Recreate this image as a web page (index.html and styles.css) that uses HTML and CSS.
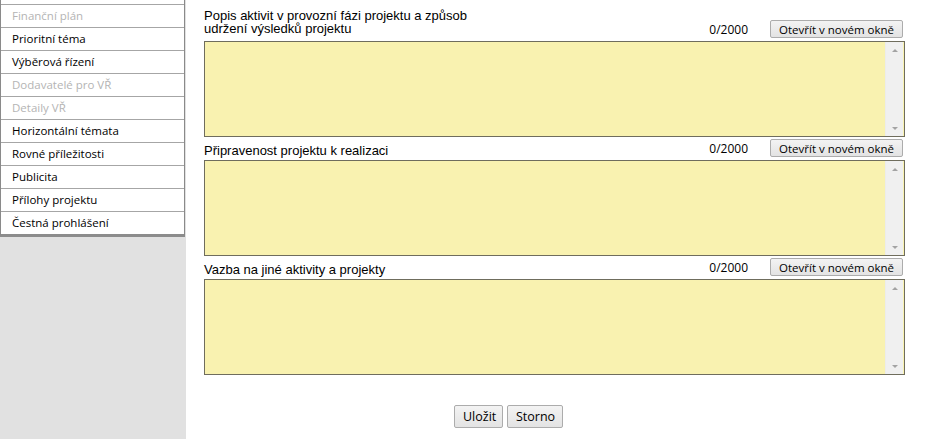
FILE: index.html
```html
<!DOCTYPE html>
<html lang="cs">
<head>
<meta charset="utf-8">
<title>Formulář</title>
<link rel="stylesheet" href="styles.css">
</head>
<body>
<div class="page">
  <aside class="sidebar">
    <ul class="menu">
      <li class="disabled">Finanční plán</li>
      <li>Prioritní téma</li>
      <li>Výběrová řízení</li>
      <li class="disabled">Dodavatelé pro VŘ</li>
      <li class="disabled">Detaily VŘ</li>
      <li>Horizontální témata</li>
      <li>Rovné příležitosti</li>
      <li>Publicita</li>
      <li>Přílohy projektu</li>
      <li>Čestná prohlášení</li>
    </ul>
  </aside>
  <main class="content">
    <section class="field first">
      <div class="field-head">
        <label class="field-label">Popis aktivit v provozní fázi projektu a způsob udržení výsledků projektu</label>
        <div class="field-tools">
          <span class="counter">0/2000</span>
          <button class="btn">Otevřít v novém okně</button>
        </div>
      </div>
      <div class="area">
        <textarea class="area-input"></textarea>
        <div class="scroll"><span class="arr up"></span><span class="arr down"></span></div>
      </div>
    </section>
    <section class="field">
      <div class="field-head">
        <label class="field-label">Připravenost projektu k realizaci</label>
        <div class="field-tools">
          <span class="counter">0/2000</span>
          <button class="btn">Otevřít v novém okně</button>
        </div>
      </div>
      <div class="area">
        <textarea class="area-input"></textarea>
        <div class="scroll"><span class="arr up"></span><span class="arr down"></span></div>
      </div>
    </section>
    <section class="field">
      <div class="field-head">
        <label class="field-label">Vazba na jiné aktivity a projekty</label>
        <div class="field-tools">
          <span class="counter">0/2000</span>
          <button class="btn">Otevřít v novém okně</button>
        </div>
      </div>
      <div class="area">
        <textarea class="area-input"></textarea>
        <div class="scroll"><span class="arr up"></span><span class="arr down"></span></div>
      </div>
    </section>
    <div class="actions">
      <button class="btn big">Uložit</button>
      <button class="btn big">Storno</button>
    </div>
  </main>
</div>
</body>
</html>
```
FILE: styles.css
```css
html, body {
  margin: 0;
  padding: 0;
  height: 100%;
  background: #ffffff;
}
body {
  font-family: "Liberation Sans", Arial, sans-serif;
  font-size: 13px;
  color: #000;
  overflow: hidden;
}
.page {
  display: flex;
  height: 439px;
}
.sidebar {
  width: 186px;
  flex: none;
  background: #e1e1e1;
}
.menu {
  list-style: none;
  margin: 0;
  padding: 4px 0 0;
  width: 185px;
  background: #fff;
  border-left: 1px solid #8a8a8a;
  border-bottom: 3px solid #8c8c8c;
  box-sizing: border-box;
  border-right: 1px solid #8a8a8a;
}
.menu li {
  border-top: 1px solid #a6a6a6;
  height: 22px;
  line-height: 22px;
  padding-left: 11px;
  font-family: "Open Sans", "Noto Sans", sans-serif;
  font-size: 11.5px;
  color: #000;
  white-space: nowrap;
}
.menu li.disabled {
  color: #b4b4b4;
}
.content {
  padding-left: 18px;
  width: 701px;
  flex: none;
}
.field-head {
  display: flex;
  justify-content: space-between;
  align-items: flex-end;
  margin-top: 2px;
  margin-bottom: 3px;
}
.field.first .field-head {
  margin-top: 9px;
}
.field-label {
  width: 270px;
  line-height: 13px;
  font-size: 13px;
}
.field.first .field-label {
  padding-bottom: 3px;
}
.field-tools {
  display: flex;
  align-items: center;
  gap: 22px;
  margin-right: 2px;
}
.counter {
  font-family: "Open Sans", "Noto Sans", sans-serif;
  font-size: 12px;
  line-height: 14px;
  padding-top: 2px;
}
.btn {
  font-family: "Open Sans", "Noto Sans", sans-serif;
  font-size: 11.5px;
  color: #000;
  height: 18px;
  padding: 0 8px;
  border: 1px solid #acacac;
  border-radius: 2px;
  background: linear-gradient(#f3f3f3, #e3e3e3);
  line-height: 15px;
}
.area {
  display: flex;
  height: 96px;
  box-sizing: border-box;
  border: 1px solid #6f6d5d;
  background: #f9f2b0;
}
.area-input {
  flex: 1;
  border: none;
  background: transparent;
  resize: none;
  margin: 0;
  padding: 0;
  outline: none;
}
.scroll {
  width: 17px;
  margin-right: 1px;
  background: #f0f0f0;
  border-left: 1px solid #ececec;
  display: flex;
  flex-direction: column;
  justify-content: space-between;
  align-items: center;
  padding: 7px 0 6px;
}
.arr {
  width: 0;
  height: 0;
  border-left: 3px solid transparent;
  border-right: 3px solid transparent;
}
.arr.up { border-bottom: 3px solid #a3a3a3; }
.arr.down { border-top: 3px solid #a3a3a3; }
.actions {
  display: flex;
  gap: 4px;
  margin-top: 30px;
  padding-left: 250px;
}
.btn.big {
  height: 23px;
  font-size: 12.5px;
  padding: 0 8px;
  line-height: 19px;
}
.actions .btn:first-child { width: 49px; }
.actions .btn:last-child { width: 56px; }
```
